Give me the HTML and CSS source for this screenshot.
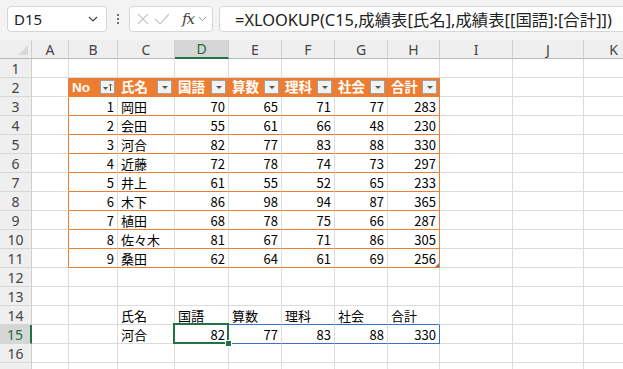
FILE: index.html
```html
<!DOCTYPE html>
<html lang="ja">
<head>
    <meta charset="UTF-8">
    <title>成績表</title>
    <link rel="stylesheet" href="styles.css">
</head>
<body>
    <div class="bar">
        <div class="namebox">
            <span>D15</span>
            <svg class="chev" width="10" height="6" viewBox="0 0 10 6"><path d="M1 1l4 4 4-4" fill="none" stroke="#444" stroke-width="1.2"/></svg>
        </div>
        <div class="dots"><i></i><i></i><i></i></div>
        <div class="fxbox">
            <svg width="14" height="14" viewBox="0 0 14 14"><path d="M2 2l10 10M12 2L2 12" stroke="#c8c8c8" stroke-width="1.2"/></svg>
            <svg width="16" height="14" viewBox="0 0 16 14"><path d="M1 7l5 5 9-10" fill="none" stroke="#c8c8c8" stroke-width="1.2"/></svg>
            <span class="fx">fx</span>
            <svg width="9" height="6" viewBox="0 0 9 6"><path d="M1 1l3.5 3.5L8 1" fill="none" stroke="#999" stroke-width="1"/></svg>
        </div>
        <div class="formula">=XLOOKUP(C15,成績表[氏名],成績表[[国語]:[合計]])</div>
    </div>

    <table class="sheet">
        <colgroup>
            <col style="width:32px"><col style="width:37px"><col style="width:49px"><col style="width:57px">
            <col style="width:54px"><col style="width:53px"><col style="width:53px"><col style="width:53px">
            <col style="width:52px"><col style="width:73px"><col style="width:71px"><col style="width:60px">
        </colgroup>
        <tr class="cols">
            <th class="corner"><span class="tri"></span></th>
            <th>A</th><th>B</th><th>C</th><th class="sel">D</th><th>E</th><th>F</th><th>G</th><th>H</th><th>I</th><th>J</th><th>K</th>
        </tr>
        <tr><th>1</th><td></td><td></td><td></td><td></td><td></td><td></td><td></td><td></td><td></td><td></td><td></td></tr>
        <tr>
            <th>2</th><td class="tl"></td>
            <td class="hc"><div class="hd"><span>No</span><span class="flt sort"><svg width="11" height="9" viewBox="0 0 11 9"><path d="M1 4h5l-2.5 3z" fill="#555"/><path d="M8.5 1v7M7 2.5l1.5-1.5 1.5 1.5" fill="none" stroke="#555" stroke-width="1"/></svg></span></div></td>
            <td class="hc"><div class="hd"><span>氏名</span><span class="flt"></span></div></td>
            <td class="hc"><div class="hd"><span>国語</span><span class="flt"></span></div></td>
            <td class="hc"><div class="hd"><span>算数</span><span class="flt"></span></div></td>
            <td class="hc"><div class="hd"><span>理科</span><span class="flt"></span></div></td>
            <td class="hc"><div class="hd"><span>社会</span><span class="flt"></span></div></td>
            <td class="hc tr"><div class="hd"><span>合計</span><span class="flt"></span></div></td>
            <td></td><td></td><td></td><td></td>
        </tr>
        <tr><th>3</th><td class="tl"></td><td class="tb n">1</td><td class="tb">岡田</td><td class="tb n">70</td><td class="tb n">65</td><td class="tb n">71</td><td class="tb n">77</td><td class="tb tr n">283</td><td></td><td></td><td></td></tr>
        <tr><th>4</th><td class="tl"></td><td class="tb n">2</td><td class="tb">会田</td><td class="tb n">55</td><td class="tb n">61</td><td class="tb n">66</td><td class="tb n">48</td><td class="tb tr n">230</td><td></td><td></td><td></td></tr>
        <tr><th>5</th><td class="tl"></td><td class="tb n">3</td><td class="tb">河合</td><td class="tb n">82</td><td class="tb n">77</td><td class="tb n">83</td><td class="tb n">88</td><td class="tb tr n">330</td><td></td><td></td><td></td></tr>
        <tr><th>6</th><td class="tl"></td><td class="tb n">4</td><td class="tb">近藤</td><td class="tb n">72</td><td class="tb n">78</td><td class="tb n">74</td><td class="tb n">73</td><td class="tb tr n">297</td><td></td><td></td><td></td></tr>
        <tr><th>7</th><td class="tl"></td><td class="tb n">5</td><td class="tb">井上</td><td class="tb n">61</td><td class="tb n">55</td><td class="tb n">52</td><td class="tb n">65</td><td class="tb tr n">233</td><td></td><td></td><td></td></tr>
        <tr><th>8</th><td class="tl"></td><td class="tb n">6</td><td class="tb">木下</td><td class="tb n">86</td><td class="tb n">98</td><td class="tb n">94</td><td class="tb n">87</td><td class="tb tr n">365</td><td></td><td></td><td></td></tr>
        <tr><th>9</th><td class="tl"></td><td class="tb n">7</td><td class="tb">植田</td><td class="tb n">68</td><td class="tb n">78</td><td class="tb n">75</td><td class="tb n">66</td><td class="tb tr n">287</td><td></td><td></td><td></td></tr>
        <tr><th>10</th><td class="tl"></td><td class="tb n">8</td><td class="tb">佐々木</td><td class="tb n">81</td><td class="tb n">67</td><td class="tb n">71</td><td class="tb n">86</td><td class="tb tr n">305</td><td></td><td></td><td></td></tr>
        <tr><th>11</th><td class="tl"></td><td class="tb n">9</td><td class="tb">桑田</td><td class="tb n">62</td><td class="tb n">64</td><td class="tb n">61</td><td class="tb n">69</td><td class="tb tr n end">256</td><td></td><td></td><td></td></tr>
        <tr><th>12</th><td></td><td></td><td></td><td></td><td></td><td></td><td></td><td></td><td></td><td></td><td></td></tr>
        <tr><th>13</th><td></td><td></td><td></td><td></td><td></td><td></td><td></td><td></td><td></td><td></td><td></td></tr>
        <tr><th>14</th><td></td><td></td><td>氏名</td><td class="bb">国語</td><td class="bb">算数</td><td class="bb">理科</td><td class="bb">社会</td><td class="bb">合計</td><td></td><td></td><td></td></tr>
        <tr><th class="rsel">15</th><td></td><td></td><td class="br">河合</td><td class="bb n active">82<span class="box"></span><span class="handle"></span></td><td class="bb n">77</td><td class="bb n">83</td><td class="bb n">88</td><td class="bb br n">330</td><td></td><td></td><td></td></tr>
        <tr><th>16</th><td></td><td></td><td></td><td></td><td></td><td></td><td></td><td></td><td></td><td></td><td></td></tr>
        <tr><th></th><td></td><td></td><td></td><td></td><td></td><td></td><td></td><td></td><td></td><td></td><td></td></tr>
    </table>
</body>
</html>
```

FILE: styles.css
```css
body {
    margin: 0;
    width: 623px;
    height: 369px;
    overflow: hidden;
    background-color: #ffffff;
    font-family: "Noto Sans CJK JP", sans-serif;
    color: #000000;
}
.bar {
    height: 40px;
    background-color: #f3f3f3;
    display: flex;
    align-items: flex-start;
    padding-top: 6px;
    padding-left: 7px;
    box-sizing: border-box;
}
.namebox, .fxbox, .formula {
    height: 26px;
    background-color: #ffffff;
    border: 1px solid #d6d6d6;
    border-radius: 4px;
    box-sizing: border-box;
    display: flex;
    align-items: center;
}
.namebox {
    width: 100px;
    justify-content: space-between;
    padding: 0 8px 0 6px;
    font-family: "Noto Sans", sans-serif;
    font-size: 15px;
    color: #222222;
}
.dots {
    width: 22px;
    display: flex;
    flex-direction: column;
    align-items: center;
    gap: 2px;
    padding-top: 8px;
}
.dots i {
    width: 2px;
    height: 2px;
    background-color: #444444;
    border-radius: 1px;
}
.fxbox {
    width: 84px;
    padding: 0 4px 0 6px;
    gap: 4px;
}
.fx {
    font-family: "DejaVu Serif", serif;
    font-style: italic;
    font-size: 15px;
    color: #444444;
    margin-left: 8px;
    letter-spacing: -1px;
}
.formula {
    flex: 1;
    margin-left: 6px;
    margin-right: -6px;
    padding-left: 15px;
    font-family: "Noto Sans", "Noto Sans CJK JP", sans-serif;
    font-size: 16.4px;
    color: #222222;
    white-space: nowrap;
}
.sheet {
    table-layout: fixed;
    border-collapse: separate;
    border-spacing: 0;
    width: 644px;
    font-size: 13px;
}
.sheet td, .sheet th {
    box-sizing: border-box;
    height: 19px;
    padding: 0 3px;
    border-right: 1px solid #dcdcdc;
    border-bottom: 1px solid #dcdcdc;
    line-height: 17px;
    white-space: nowrap;
    overflow: hidden;
}
.sheet th {
    background-color: #efefef;
    font-weight: normal;
    font-family: "Noto Sans", sans-serif;
    font-size: 14px;
    color: #444444;
    text-align: center;
    border-right-color: #d0d0d0;
    border-bottom-color: #d6d6d6;
}
.cols th {
    height: 18px;
    border-bottom: 1px solid #b8b8b8;
}
.corner {
    position: relative;
}
.tri {
    position: absolute;
    right: 3px;
    bottom: 3px;
    width: 0;
    height: 0;
    border-left: 10px solid transparent;
    border-bottom: 10px solid #d9d9d9;
}
.cols th.sel {
    background-color: #d6d6d6;
    color: #1e6b3e;
    border-bottom: 2px solid #217346;
}
.sheet th.rsel {
    background-color: #d6d6d6;
    color: #1e6b3e;
    border-right: 2px solid #217346;
}
.n {
    text-align: right;
}
.tl {
    border-right-color: #ed7d31 !important;
}
.tb {
    border-bottom-color: #ed7d31 !important;
}
.tr {
    border-right-color: #ed7d31 !important;
}
.hc {
    background-color: #ed7d31;
    color: #ffffff;
    font-weight: bold;
    font-size: 13.5px;
    border-right-color: #ed7d31 !important;
    border-bottom-color: #ed7d31 !important;
    padding: 0 2px 0 3px !important;
}
.hd {
    display: flex;
    justify-content: space-between;
    align-items: center;
}
.hd span:first-child {
    font-family: "Liberation Sans", "Noto Sans CJK JP", sans-serif;
}
.flt {
    width: 15px;
    height: 14px;
    box-sizing: border-box;
    background-color: #f2f2f2;
    border: 1px solid #a0a0a0;
    position: relative;
    display: flex;
    align-items: center;
    justify-content: center;
}
.flt::after {
    content: "";
    border-left: 3px solid transparent;
    border-right: 3px solid transparent;
    border-top: 3px solid #555555;
}
.flt.sort::after {
    display: none;
}
.end {
    position: relative;
}
.end::after {
    content: "";
    position: absolute;
    right: 0;
    bottom: 0;
    border-left: 4px solid transparent;
    border-bottom: 4px solid #5b7fb8;
}
.bb {
    border-bottom-color: #3f6fc4 !important;
}
.br {
    border-right-color: #3f6fc4 !important;
}
.active {
    position: relative;
    overflow: visible !important;
}
.box {
    position: absolute;
    left: -2px;
    top: -2px;
    right: -1px;
    bottom: -1px;
    border: 2px solid #217346;
}
.handle {
    position: absolute;
    right: -4px;
    bottom: -4px;
    width: 5px;
    height: 5px;
    background-color: #217346;
    border: 1px solid #ffffff;
}
```
